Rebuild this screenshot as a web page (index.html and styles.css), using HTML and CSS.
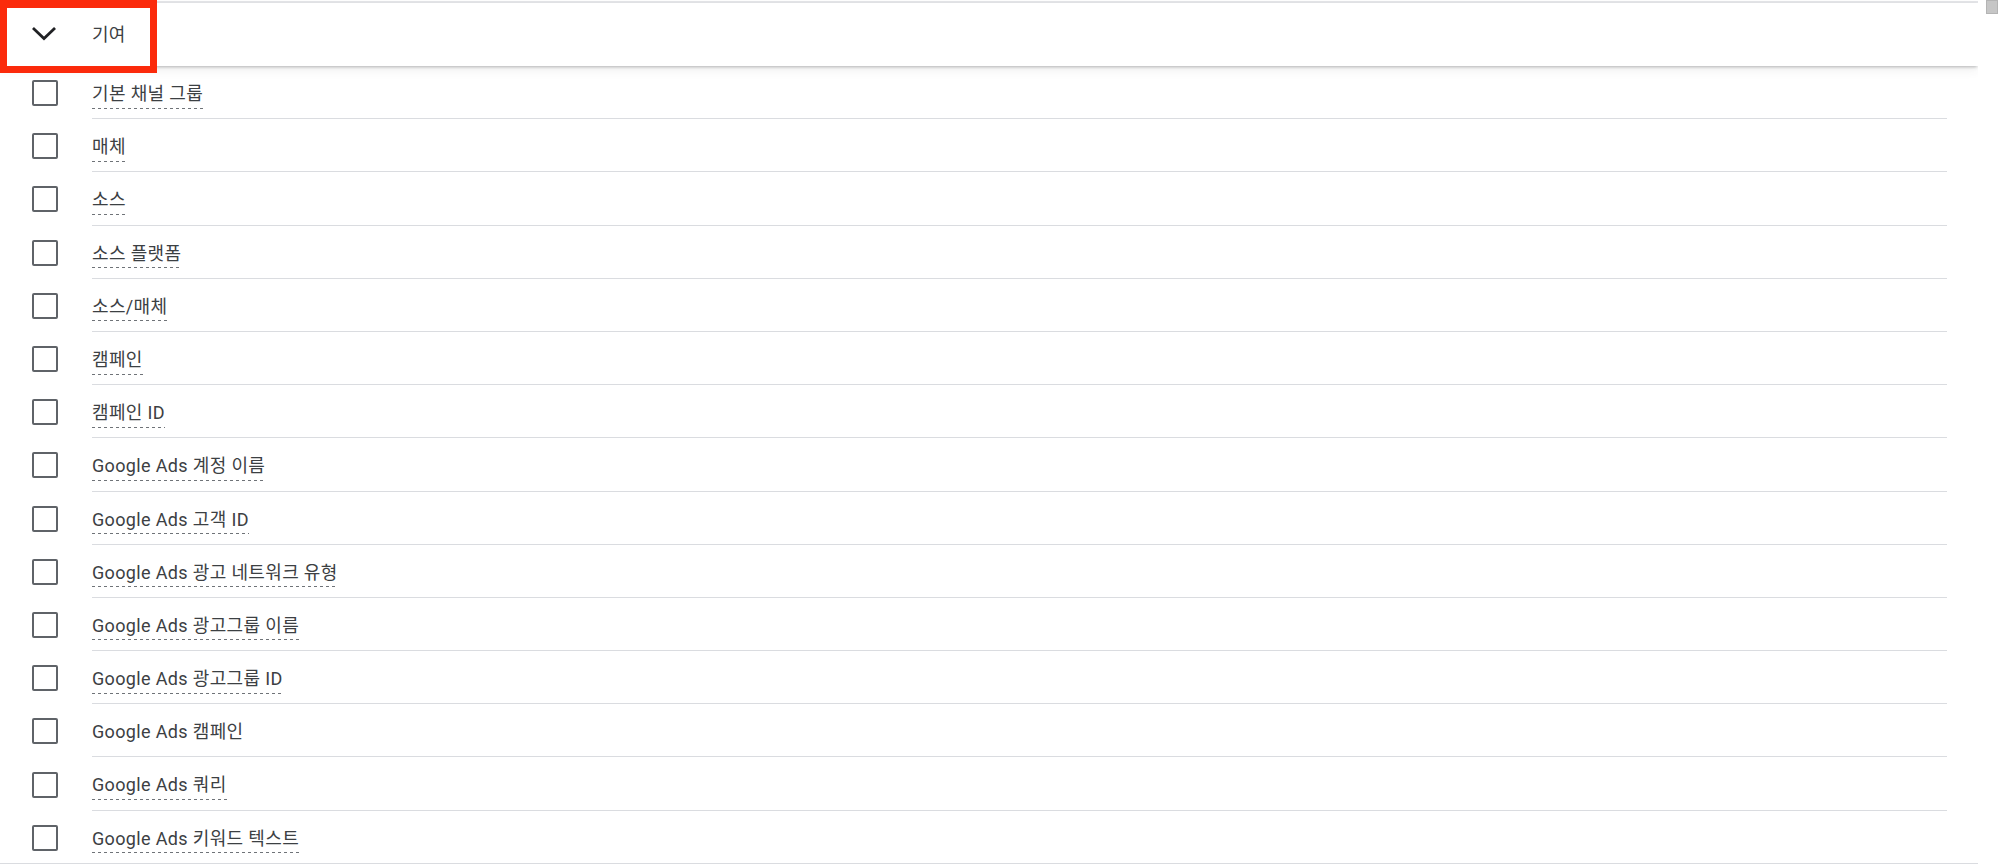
FILE: index.html
```html
<!DOCTYPE html>
<html lang="ko">
<head>
<meta charset="utf-8">
<title>기여</title>
<link rel="stylesheet" href="styles.css">
</head>
<body>
<div class="frame">
  <div class="topline"></div>
  <div class="group-header">
    <span class="chev">
      <svg width="24" height="14" viewBox="0 0 24 14"><polyline points="2,2 12,11.5 22,2" fill="none" stroke="#202124" stroke-width="2.8" stroke-linecap="square"/></svg>
    </span>
    <span class="group-title">기여</span>
  </div>
  <div class="list">
    <div class="row"><div class="cb-cell"><span class="cb"></span></div><div class="label-cell"><span class="label dashed">기본 채널 그룹</span></div></div>
    <div class="row"><div class="cb-cell"><span class="cb"></span></div><div class="label-cell"><span class="label dashed">매체</span></div></div>
    <div class="row"><div class="cb-cell"><span class="cb"></span></div><div class="label-cell"><span class="label dashed">소스</span></div></div>
    <div class="row"><div class="cb-cell"><span class="cb"></span></div><div class="label-cell"><span class="label dashed">소스 플랫폼</span></div></div>
    <div class="row"><div class="cb-cell"><span class="cb"></span></div><div class="label-cell"><span class="label dashed">소스/매체</span></div></div>
    <div class="row"><div class="cb-cell"><span class="cb"></span></div><div class="label-cell"><span class="label dashed">캠페인</span></div></div>
    <div class="row"><div class="cb-cell"><span class="cb"></span></div><div class="label-cell"><span class="label dashed">캠페인 ID</span></div></div>
    <div class="row"><div class="cb-cell"><span class="cb"></span></div><div class="label-cell"><span class="label dashed">Google Ads 계정 이름</span></div></div>
    <div class="row"><div class="cb-cell"><span class="cb"></span></div><div class="label-cell"><span class="label dashed">Google Ads 고객 ID</span></div></div>
    <div class="row"><div class="cb-cell"><span class="cb"></span></div><div class="label-cell"><span class="label dashed">Google Ads 광고 네트워크 유형</span></div></div>
    <div class="row"><div class="cb-cell"><span class="cb"></span></div><div class="label-cell"><span class="label dashed">Google Ads 광고그룹 이름</span></div></div>
    <div class="row"><div class="cb-cell"><span class="cb"></span></div><div class="label-cell"><span class="label dashed">Google Ads 광고그룹 ID</span></div></div>
    <div class="row"><div class="cb-cell"><span class="cb"></span></div><div class="label-cell"><span class="label">Google Ads 캠페인</span></div></div>
    <div class="row"><div class="cb-cell"><span class="cb"></span></div><div class="label-cell"><span class="label dashed">Google Ads 쿼리</span></div></div>
    <div class="row"><div class="cb-cell"><span class="cb"></span></div><div class="label-cell"><span class="label dashed">Google Ads 키워드 텍스트</span></div></div>
  </div>
  <div class="highlight"></div>
</div>
<div class="scroll-thumb"></div>
</body>
</html>
```
FILE: styles.css
```css
html, body {
  margin: 0;
  padding: 0;
  background: #ffffff;
  overflow: hidden;
}
body {
  font-family: Roboto, "Noto Sans CJK KR", "Noto Sans", sans-serif;
  color: #3c4043;
  width: 2000px;
  height: 864px;
  position: relative;
}
.frame {
  position: relative;
  width: 1978px;
  height: 864px;
  box-sizing: border-box;
  border-bottom: 1px solid #dadce0;
  overflow: hidden;
}
.topline {
  margin-top: 1px;
  height: 2px;
  background: #e4e5e8;
}
.group-header {
  position: relative;
  z-index: 2;
  height: 63px;
  background: #fff;
  display: flex;
  align-items: center;
  box-shadow: 0 2px 3px -1px rgba(60, 64, 67, 0.35), 0 4px 10px rgba(60, 64, 67, 0.08);
}
.chev {
  width: 92px;
  padding-left: 32px;
  box-sizing: border-box;
  display: flex;
  align-items: center;
}
.chev svg {
  display: block;
  margin-top: -2px;
}
.group-title {
  font-size: 18px;
  line-height: 24px;
  color: #3c4043;
  letter-spacing: 0.3px;
}
.list {
  position: relative;
  z-index: 1;
}
.row {
  display: flex;
  height: 53.2px;
}
.cb-cell {
  width: 92px;
  padding-left: 32px;
  box-sizing: border-box;
  display: flex;
  align-items: center;
}
.cb {
  display: block;
  width: 26px;
  height: 26px;
  box-sizing: border-box;
  border: 2.5px solid #5f6368;
  border-radius: 2px;
  margin-top: 1px;
}
.label-cell {
  flex: 1;
  margin-right: 31px;
  border-bottom: 1px solid #dadce0;
  box-sizing: border-box;
  padding-top: 16px;
}
.label {
  display: inline-block;
  font-size: 18px;
  line-height: 24px;
  padding-bottom: 3px;
  color: #3c4043;
  letter-spacing: 0.35px;
}
.label.dashed {
  background-image: linear-gradient(to right, #6f7378 55%, transparent 55%);
  background-size: 6px 1.4px;
  background-repeat: repeat-x;
  background-position: 0 100%;
}
.highlight {
  position: absolute;
  left: 0;
  top: 0;
  width: 157px;
  height: 73px;
  box-sizing: border-box;
  border: 7.5px solid #fb2a0b;
  border-top-width: 8px;
  z-index: 5;
}
.scroll-thumb {
  position: absolute;
  left: 1986px;
  top: 0;
  width: 12px;
  height: 14px;
  background: #c6c6c6;
  border: 1px solid #b4b4b4;
  box-sizing: border-box;
}
```
